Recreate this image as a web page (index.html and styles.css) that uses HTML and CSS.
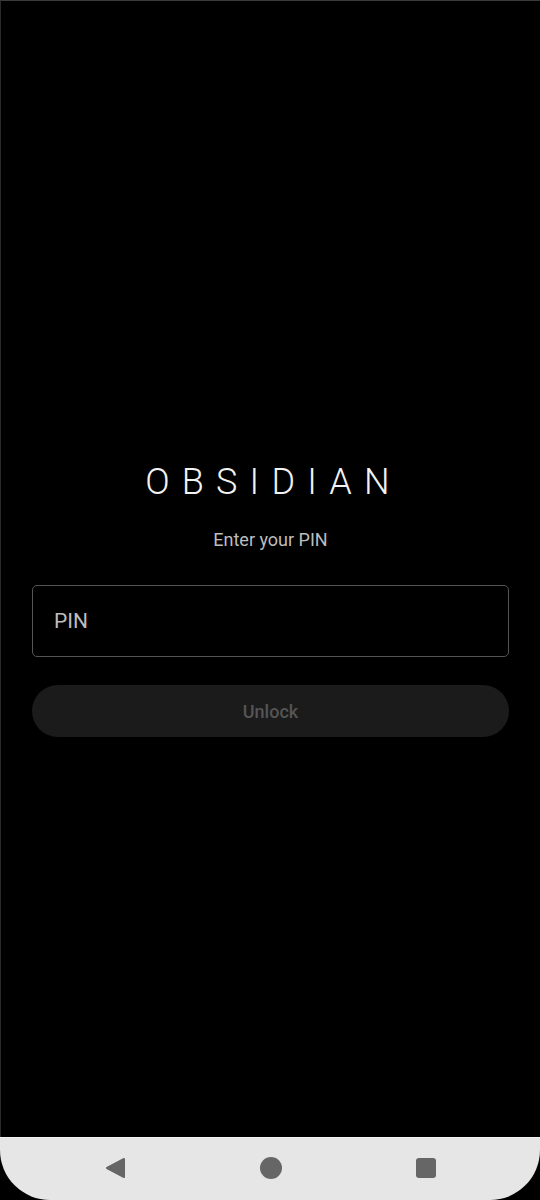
FILE: index.html
```html
<!DOCTYPE html>
<html lang="en">
<head>
  <meta charset="UTF-8">
  <meta name="viewport" content="width=device-width, initial-scale=1.0">
  <title>Obsidian</title>
  <link rel="stylesheet" href="styles.css">
</head>
<body>
  <div class="screen">
    <div class="lock">
      <div class="title">OBSIDIAN</div>
      <div class="subtitle">Enter your PIN</div>
      <input class="pin-input" type="password" placeholder="PIN">
      <button class="unlock" disabled>Unlock</button>
    </div>
  </div>

  <div class="navbar">
    <svg class="nav-back" width="21" height="22" viewBox="0 0 21 22">
      <path d="M19 2 L2 11 L19 20 Z" fill="#666" stroke="#666" stroke-width="2" stroke-linejoin="round"/>
    </svg>
    <span class="nav-home"></span>
    <span class="nav-recent"></span>
  </div>
</body>
</html>
```

FILE: styles.css
```css
body {
  margin: 0;
  font-family: Roboto, "Noto Sans", sans-serif;
  background-color: #000;
  color: white;
  width: 540px;
  height: 1200px;
  overflow: hidden;
}
.screen {
  height: 1137px;
  border-top: 1px solid #3a3a3a;
  border-left: 1px solid #2a2a2a;
  box-sizing: border-box;
}
.lock {
  display: flex;
  flex-direction: column;
  align-items: center;
  padding: 463px 31px 0 31px;
}
.title {
  font-size: 36px;
  font-weight: 300;
  line-height: 36px;
  letter-spacing: 12.2px;
  padding-left: 6px;
  color: #f2f2f2;
}
.subtitle {
  font-size: 18px;
  line-height: 20px;
  color: #bdbdbd;
  margin-top: 30px;
}
.pin-input {
  margin-top: 35px;
  width: 100%;
  height: 72px;
  box-sizing: border-box;
  background: #000;
  border: 1px solid #555;
  border-radius: 5px;
  padding: 0 21px;
  font-family: Roboto, sans-serif;
  font-size: 21px;
  color: #ddd;
  outline: none;
}
.pin-input::placeholder {
  color: #bdbdbd;
}
.unlock {
  margin-top: 28px;
  width: 100%;
  height: 52px;
  border: none;
  border-radius: 26px;
  background: #1b1b1b;
  color: #555;
  font-family: Roboto, sans-serif;
  font-size: 18px;
  font-weight: 500;
}
.navbar {
  height: 63px;
  background: #e6e6e6;
  border-top: 1px solid #f2f2f2;
  box-sizing: border-box;
  border-radius: 0 0 50px 50px;
  display: flex;
  align-items: center;
  justify-content: center;
  gap: 134px;
  padding-bottom: 2px;
}
.nav-home {
  width: 22px;
  height: 22px;
  border-radius: 50%;
  background: #666;
}
.nav-recent {
  width: 20px;
  height: 20px;
  border-radius: 3px;
  background: #666;
}
```
